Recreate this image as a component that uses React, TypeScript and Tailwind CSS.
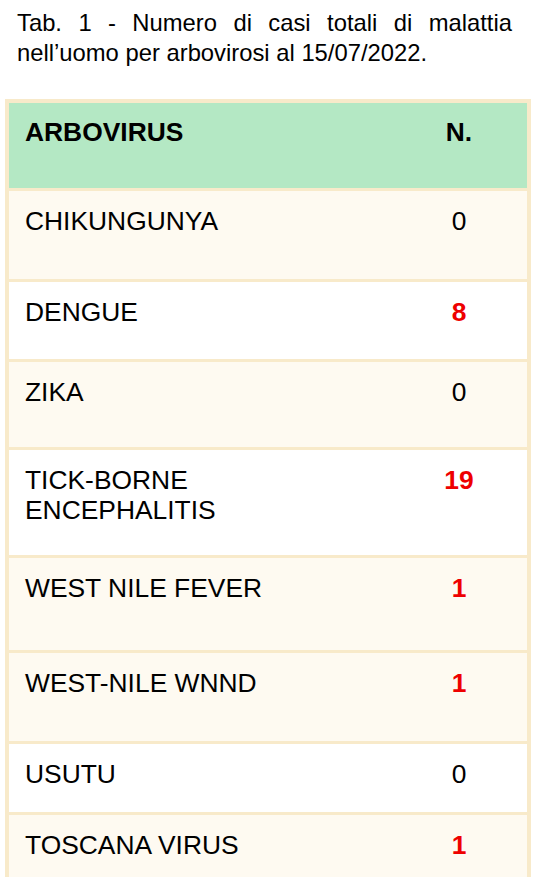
const rows = [
  { name: ['CHIKUNGUNYA'], n: 0, h: 'h-[91px]', bg: 'bg-[#fefaf1]' },
  { name: ['DENGUE'], n: 8, h: 'h-[80px]', bg: 'bg-white' },
  { name: ['ZIKA'], n: 0, h: 'h-[88px]', bg: 'bg-[#fefaf1]' },
  { name: ['TICK-BORNE', 'ENCEPHALITIS'], n: 19, h: 'h-[108px]', bg: 'bg-white' },
  { name: ['WEST NILE FEVER'], n: 1, h: 'h-[95px]', bg: 'bg-[#fefaf1]' },
  { name: ['WEST-NILE WNND'], n: 1, h: 'h-[91px]', bg: 'bg-[#fefaf1]' },
  { name: ['USUTU'], n: 0, h: 'h-[71px]', bg: 'bg-white' },
  { name: ['TOSCANA VIRUS'], n: 1, h: 'h-[62px]', bg: 'bg-[#fefaf1]' },
];

export default function App() {
  return (
    <div className="w-[537px] h-[892px] bg-white overflow-hidden font-['Liberation_Sans',Arial,sans-serif] text-black">
      <p className="pt-[8px] pl-[17px] w-[512px] text-[23.8px] leading-[30px] text-justify">
        Tab. 1 - Numero di casi totali di malattia nell’uomo per arbovirosi al 15/07/2022.
      </p>

      <div className="mt-[31px] ml-[5px] w-[526px] border-x-[4px] border-t-[4px] border-[#f8eaca] text-[26.4px] leading-[30px]">
        <div className="grid grid-cols-[1fr_136px] h-[88px] bg-[#b4e8c4] border-b-[3px] border-[#f8eaca] pt-[14px] font-bold">
          <div className="pl-[16px]">ARBOVIRUS</div>
          <div className="text-center">N.</div>
        </div>
        {rows.map((r, i) => (
          <div
            key={r.name[0]}
            className={`grid grid-cols-[1fr_136px] pt-[15px] ${r.h} ${r.bg} ${i < rows.length - 1 ? 'border-b-[3px] border-[#f8eaca]' : ''}`}
          >
            <div className="pl-[16px]">
              {r.name.map((l) => (
                <div key={l}>{l}</div>
              ))}
            </div>
            <div className={`text-center ${r.n > 0 ? 'font-bold text-[#ee0000]' : ''}`}>{r.n}</div>
          </div>
        ))}
      </div>
    </div>
  );
}
